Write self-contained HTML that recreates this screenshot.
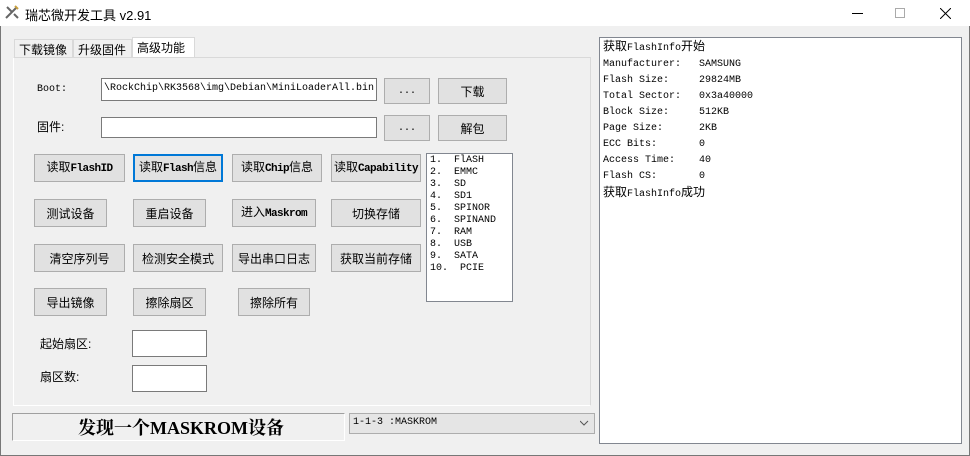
<!DOCTYPE html>
<html><head><meta charset="utf-8"><style>
*{margin:0;padding:0;box-sizing:border-box}
body{width:970px;height:456px;background:#f0f0f0;position:relative;overflow:hidden;font-family:"Liberation Sans","Noto Sans CJK SC",sans-serif;font-size:12px;color:#000}
.a{position:absolute}
.title{left:0;top:0;width:970px;height:26px;background:#fff}
.btn{position:absolute;background:#e1e1e1;border:1px solid #adadad;text-align:center;font-size:12px;display:flex;align-items:center;justify-content:center;white-space:nowrap}
.btn>span{line-height:14px}
.m{font-family:"Liberation Mono",monospace;font-size:11px;font-weight:bold;letter-spacing:-0.6px}
.mono{font-family:"Liberation Mono","Noto Sans CJK SC",monospace;font-size:10px}
.edit{position:absolute;background:#fff;border:1px solid #7a7a7a}
.tab{position:absolute;top:39px;height:19px;border:1px solid #d9d9d9;border-bottom:none;background:#f0f0f0;font-size:12px;padding:1px 4px}
</style></head><body>
<div class="a" style="left:0;top:0;width:1px;height:456px;background:#777"></div>
<div class="a" style="left:969px;top:0;width:1px;height:456px;background:#777"></div>
<div class="a" style="left:0;top:455px;width:970px;height:1px;background:#777"></div>
<div class="a title"></div>
<svg class="a" style="left:4px;top:4px" width="16" height="16" viewBox="0 0 16 16"><path d="M2 14L13 3M3 3l5 5M10 10l4 4" stroke="#666" stroke-width="2"/><path d="M11 2l3 3" stroke="#c8a040" stroke-width="2"/></svg>
<div class="a" style="left:25px;top:5px;font-size:13px">瑞芯微开发工具 v2.91</div>
<div class="a" style="left:852px;top:13px;width:11px;height:1px;background:#000"></div>
<div class="a" style="left:895px;top:8px;width:10px;height:10px;border:1px solid #aaa"></div>
<svg class="a" style="left:940px;top:8px" width="11" height="11"><path d="M0 0L11 11M11 0L0 11" stroke="#000" stroke-width="1"/></svg>

<div class="tab" style="left:14px;width:59px">下载镜像</div>
<div class="tab" style="left:73px;width:59px">升级固件</div>
<div class="tab" style="left:132px;top:37px;height:21px;width:63px;background:#fff;border-color:#d9d9d9">高级功能</div>
<div class="a" style="left:13px;top:57px;width:578px;height:349px;border:1px solid #fff;border-top-color:#d9d9d9;border-right-color:#d9d9d9"></div>

<div class="a mono" style="left:37px;top:84px">Boot:</div>
<div class="edit mono" style="left:101px;top:78px;width:276px;height:23px;padding:4px 2px;white-space:nowrap;overflow:hidden">\RockChip\RK3568\img\Debian\MiniLoaderAll.bin</div>
<div class="btn mono" style="left:384px;top:78px;width:46px;height:26px">...</div>
<div class="btn" style="left:438px;top:78px;width:69px;height:26px">下载</div>
<div class="a" style="left:37px;top:118px">固件:</div>
<div class="edit" style="left:101px;top:117px;width:276px;height:21px"></div>
<div class="btn mono" style="left:384px;top:115px;width:46px;height:26px">...</div>
<div class="btn" style="left:438px;top:115px;width:69px;height:26px">解包</div>

<div class="btn" style="left:34px;top:154px;width:91px;height:28px"><span>读取<span class="m">FlashID</span></span></div>
<div class="btn" style="left:133px;top:154px;width:90px;height:28px;border:2px solid #0078d7"><span>读取<span class="m">Flash</span>信息</span></div>
<div class="btn" style="left:232px;top:154px;width:90px;height:28px"><span>读取<span class="m">Chip</span>信息</span></div>
<div class="btn" style="left:331px;top:154px;width:90px;height:28px"><span>读取<span class="m">Capability</span></span></div>

<div class="btn" style="left:34px;top:199px;width:73px;height:28px">测试设备</div>
<div class="btn" style="left:133px;top:199px;width:73px;height:28px">重启设备</div>
<div class="btn" style="left:232px;top:199px;width:84px;height:28px"><span>进入<span class="m">Maskrom</span></span></div>
<div class="btn" style="left:331px;top:199px;width:90px;height:28px">切换存储</div>

<div class="btn" style="left:34px;top:244px;width:91px;height:28px">清空序列号</div>
<div class="btn" style="left:133px;top:244px;width:90px;height:28px">检测安全模式</div>
<div class="btn" style="left:232px;top:244px;width:84px;height:28px">导出串口日志</div>
<div class="btn" style="left:331px;top:244px;width:90px;height:28px">获取当前存储</div>

<div class="btn" style="left:34px;top:288px;width:73px;height:28px">导出镜像</div>
<div class="btn" style="left:133px;top:288px;width:73px;height:28px">擦除扇区</div>
<div class="btn" style="left:238px;top:288px;width:72px;height:28px">擦除所有</div>

<div class="a" style="left:40px;top:335px">起始扇区:</div>
<div class="edit" style="left:132px;top:330px;width:75px;height:27px"></div>
<div class="a" style="left:40px;top:368px">扇区数:</div>
<div class="edit" style="left:132px;top:365px;width:75px;height:27px"></div>

<div class="edit mono" style="left:426px;top:153px;width:87px;height:149px;padding:1px 3px;line-height:12px;white-space:pre;border-color:#828790">1.  FlASH
2.  EMMC
3.  SD
4.  SD1
5.  SPINOR
6.  SPINAND
7.  RAM
8.  USB
9.  SATA
10.  PCIE</div>

<div class="a" style="left:12px;top:413px;width:333px;height:28px;border:1px solid #a0a0a0;border-right-color:#fff;border-bottom-color:#fff"></div>
<div class="a" style="left:78px;top:414px;font-family:'Liberation Serif','Noto Serif CJK SC',serif;font-weight:bold;font-size:18px">发现一个MASKROM设备</div>
<div class="a mono" style="left:349px;top:413px;width:246px;height:21px;background:#e5e5e5;border:1px solid #adadad;padding:3px 3px">1-1-3 :MASKROM</div>
<svg class="a" style="left:580px;top:420px" width="9" height="6"><path d="M0 1l4 4 4-4" stroke="#555" fill="none"/></svg>

<div class="edit mono" style="left:599px;top:37px;width:363px;height:407px;padding:1px 3px;line-height:16px;white-space:pre;border-color:#828790"><span style="font-size:12px">获取</span>FlashInfo<span style="font-size:12px">开始</span>
Manufacturer:   SAMSUNG
Flash Size:     29824MB
Total Sector:   0x3a40000
Block Size:     512KB
Page Size:      2KB
ECC Bits:       0
Access Time:    40
Flash CS:       0
<span style="font-size:12px">获取</span>FlashInfo<span style="font-size:12px">成功</span></div>
</body></html>
